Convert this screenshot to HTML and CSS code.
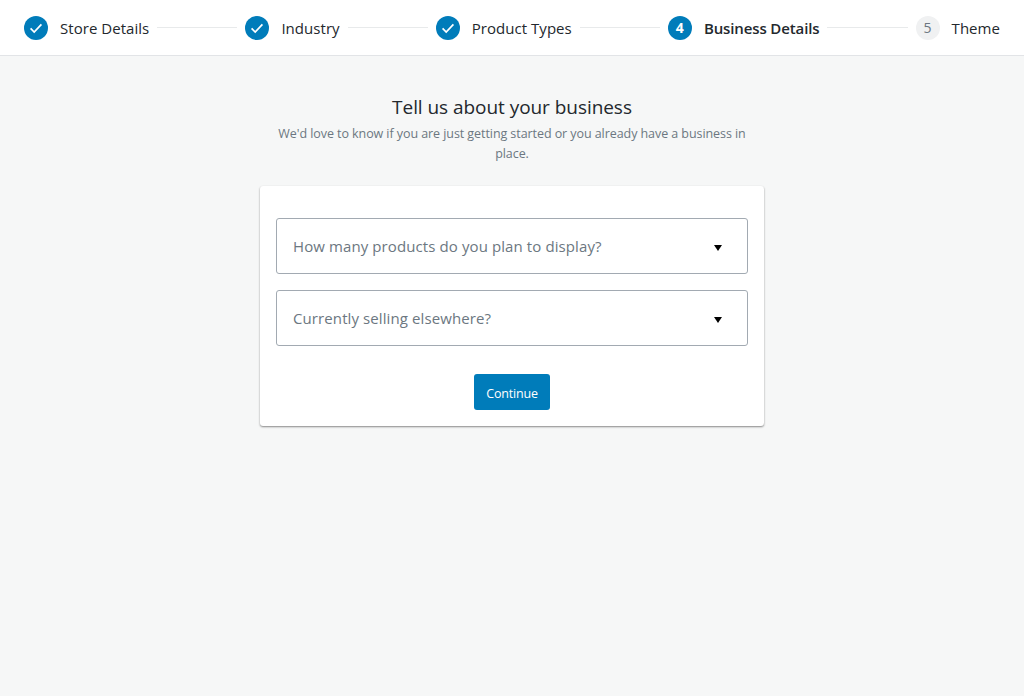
FILE: index.html
```html
<!DOCTYPE html>
<html lang="en">
<head>
  <meta charset="UTF-8">
  <meta name="viewport" content="width=device-width, initial-scale=1.0">
  <title>Business Details</title>
  <link rel="stylesheet" href="styles.css">
</head>
<body>

  <header class="stepper">
    <div class="step">
      <span class="step-icon"><svg viewBox="0 0 24 24" width="24" height="24"><path d="M6.6 12.4l3.6 3.6 7.2-7.6" fill="none" stroke="#fff" stroke-width="1.7"/></svg></span>
      <span class="step-label">Store Details</span>
    </div>
    <div class="step-line"></div>
    <div class="step">
      <span class="step-icon"><svg viewBox="0 0 24 24" width="24" height="24"><path d="M6.6 12.4l3.6 3.6 7.2-7.6" fill="none" stroke="#fff" stroke-width="1.7"/></svg></span>
      <span class="step-label">Industry</span>
    </div>
    <div class="step-line"></div>
    <div class="step">
      <span class="step-icon"><svg viewBox="0 0 24 24" width="24" height="24"><path d="M6.6 12.4l3.6 3.6 7.2-7.6" fill="none" stroke="#fff" stroke-width="1.7"/></svg></span>
      <span class="step-label">Product Types</span>
    </div>
    <div class="step-line"></div>
    <div class="step active">
      <span class="step-icon">4</span>
      <span class="step-label">Business Details</span>
    </div>
    <div class="step-line"></div>
    <div class="step pending">
      <span class="step-icon">5</span>
      <span class="step-label">Theme</span>
    </div>
  </header>

  <main class="content">
    <h1>Tell us about your business</h1>
    <p class="intro">We'd love to know if you are just getting started or you already have a business in place.</p>

    <div class="card">
      <div class="select">
        <span class="select-text">How many products do you plan to display?</span>
        <span class="select-arrow"></span>
      </div>
      <div class="select">
        <span class="select-text">Currently selling elsewhere?</span>
        <span class="select-arrow"></span>
      </div>
      <div class="actions">
        <button class="btn-primary">Continue</button>
      </div>
    </div>
  </main>

</body>
</html>
```

FILE: styles.css
```css
* {
  box-sizing: border-box;
  margin: 0;
  padding: 0;
}

body {
  background: #f6f7f7;
  min-height: 100vh;
  font-family: "Open Sans", "Noto Sans", Arial, sans-serif;
  color: #1e1e1e;
}

.stepper {
  display: flex;
  align-items: center;
  height: 56px;
  padding: 0 24px;
  background: #fff;
  border-bottom: 1px solid #e2e4e7;
}

.step {
  display: flex;
  align-items: center;
  gap: 12px;
  font-size: 15px;
  letter-spacing: 0.04px;
  color: #23282d;
}

.step-icon {
  display: flex;
  align-items: center;
  justify-content: center;
  width: 24px;
  height: 24px;
  border-radius: 50%;
  background: #007cba;
  color: #fff;
  font-size: 14px;
  font-weight: 700;
}

.step.active .step-label {
  font-weight: 600;
  letter-spacing: -0.12px;
}

.step.pending .step-icon {
  background: #f0f1f2;
  color: #6c7781;
  font-weight: 400;
}

.step-line {
  flex: 1;
  height: 1px;
  margin: 0 8px;
  background: #e8eaeb;
}

.content {
  width: 504px;
  margin: 0 auto;
  padding-top: 37px;
  text-align: center;
}

h1 {
  font-size: 19px;
  font-weight: 400;
  line-height: 28px;
  letter-spacing: -0.05px;
  color: #23282d;
}

.intro {
  margin: 3px 16px 22px;
  font-size: 12.5px;
  line-height: 20px;
  letter-spacing: -0.07px;
  color: #6c7781;
}

.card {
  padding: 32px 16px 16px;
  background: #fff;
  border-radius: 3px;
  box-shadow: 0 1px 2px rgba(0, 0, 0, 0.45);
}

.select {
  display: flex;
  align-items: center;
  justify-content: space-between;
  height: 56px;
  margin-bottom: 16px;
  padding: 0 25px 0 16px;
  border: 1px solid #a2aab2;
  border-radius: 3px;
  font-size: 15px;
  letter-spacing: 0.1px;
  color: #6c7781;
}

.select-arrow {
  width: 0;
  height: 0;
  margin-top: 3px;
  border-left: 4px solid transparent;
  border-right: 4px solid transparent;
  border-top: 6px solid #000;
}

.actions {
  display: flex;
  justify-content: center;
  padding-top: 12px;
}

.btn-primary {
  width: 76px;
  height: 36px;
  padding-top: 2px;
  border: none;
  border-radius: 3px;
  background: #007cba;
  color: #fff;
  font-family: inherit;
  font-size: 12.5px;
  letter-spacing: -0.2px;
}
```
